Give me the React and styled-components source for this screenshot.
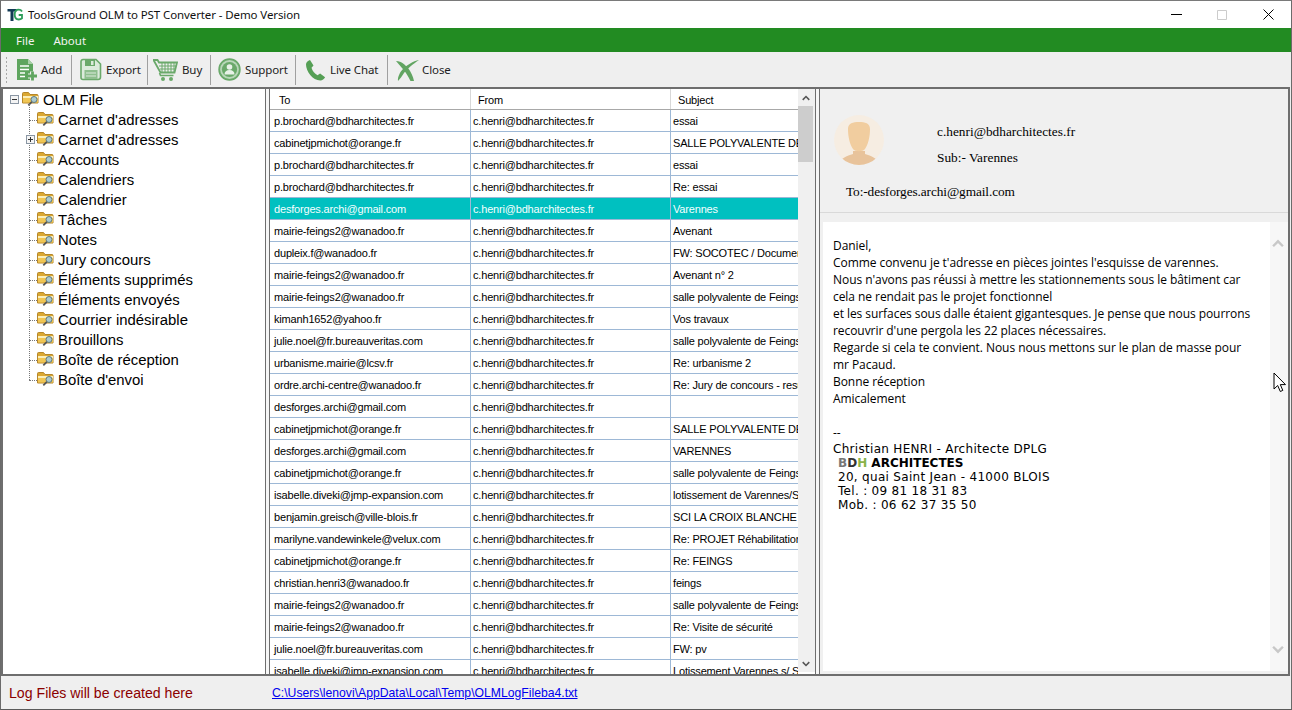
import styled, { createGlobalStyle } from 'styled-components';

const GlobalStyle = createGlobalStyle`
  html, body {
    margin: 0;
    padding: 0;
    height: 100%;
    overflow: hidden;
    background: #f0f0f0;
  }
  * {
    box-sizing: border-box;
  }
`;

const Window = styled.div`
  width: 1292px;
  height: 710px;
  display: flex;
  flex-direction: column;
  background: #efefef;
  border: 1px solid #6b6b6b;
  border-top-color: #7a7a7a;
  border-bottom-color: #5a5a5a;
  font-family: 'Liberation Sans', Arial, sans-serif;
  position: relative;
  overflow: hidden;
`;

const TitleBar = styled.div`
  height: 27px;
  flex: none;
  background: #fff;
  display: flex;
  align-items: center;
  padding-left: 6px;
  font-family: 'Noto Sans', sans-serif;
  font-size: 11.5px;
  color: #111;
`;

const TitleText = styled.span`
  margin-left: 5px;
  flex: 1;
  letter-spacing: -0.1px;
`;

const WinButton = styled.div`
  width: 46px;
  height: 27px;
  display: flex;
  align-items: center;
  justify-content: center;
`;

const MenuBar = styled.div`
  height: 24px;
  flex: none;
  background: #228b22;
  display: flex;
  align-items: center;
  padding-left: 15px;
  gap: 19px;
  font-family: 'Noto Sans', sans-serif;
  font-size: 11.5px;
  color: #f2f2f2;
`;

const ToolBar = styled.div`
  height: 35px;
  flex: none;
  display: flex;
  align-items: center;
  background: #efefef;
  padding-left: 4px;
`;

const Grip = styled.div`
  width: 3px;
  height: 27px;
  margin-right: 4px;
  background-image: radial-gradient(circle, #a8a8a8 0.8px, transparent 1px);
  background-size: 3px 4px;
`;

const ToolItem = styled.div`
  width: ${(p) => p.$w}px;
  height: 30px;
  display: flex;
  align-items: center;
  padding-left: ${(p) => p.$pad}px;
  gap: ${(p) => p.$gap}px;
  font-family: 'Noto Sans', sans-serif;
  font-size: 11.5px;
  letter-spacing: -0.1px;
  color: #222;
  border-right: ${(p) => (p.$last ? 'none' : '1px solid #a0a0a0')};
`;

const Content = styled.div`
  flex: 1;
  min-height: 0;
  display: flex;
  border-top: 2px solid #6e6e6e;
  border-bottom: 2px solid #6e6e6e;
  margin-right: 1px;
  background: #fff;
`;

const TreePane = styled.div`
  width: 264px;
  flex: none;
  background: #fff;
  border-left: 2px solid #6e6e6e;
  padding: 1px 0 0 7px;
  font-size: 14.9px;
  color: #000;
`;

const TreeRow = styled.div`
  height: 20px;
  display: flex;
  align-items: center;
  position: relative;
  padding-left: ${(p) => (p.$root ? 12 : 27)}px;
  white-space: nowrap;
  &::before {
    content: '';
    display: ${(p) => (p.$root ? 'none' : 'block')};
    position: absolute;
    left: 19px;
    top: ${(p) => (p.$first ? '-6px' : '-10px')};
    bottom: ${(p) => (p.$end ? '10px' : '0')};
    border-left: 1px dotted #777;
  }
  &::after {
    content: '';
    display: ${(p) => (p.$root ? 'none' : 'block')};
    position: absolute;
    left: 19px;
    top: 10px;
    width: 8px;
    border-top: 1px dotted #777;
  }
`;

const TreeLabel = styled.span`
  margin-left: 2px;
`;

const Expander = styled.span`
  position: absolute;
  left: ${(p) => (p.$root ? 0 : 16)}px;
  top: 5px;
  width: 9px;
  height: 9px;
  z-index: 1;
  background: #f4f4f4;
  border: 1px solid #8a96a3;
  &::before {
    content: '';
    position: absolute;
    left: 1px;
    right: 1px;
    top: 3px;
    height: 1px;
    background: #333;
  }
  &::after {
    content: '';
    display: ${(p) => (p.$plus ? 'block' : 'none')};
    position: absolute;
    top: 1px;
    bottom: 1px;
    left: 3px;
    width: 1px;
    background: #333;
  }
`;

const Splitter = styled.div`
  width: 5px;
  flex: none;
  background: #f6f6f6;
  border-left: 1px solid #6e6e6e;
  border-right: 1px solid #6e6e6e;
`;

const GridPane = styled.div`
  width: 545px;
  flex: none;
  display: flex;
  background: #fff;
  overflow: hidden;
`;

const GridBody = styled.div`
  width: 528px;
  flex: none;
  overflow: hidden;
  font-size: 11px;
  letter-spacing: -0.18px;
  color: #000;
`;

const GridRow = styled.div`
  display: grid;
  grid-template-columns: 201px 200px 127px;
  height: ${(p) => (p.$head ? 21 : 22)}px;
  background: ${(p) => (p.$selected ? '#00c0c0' : '#fff')};
  color: ${(p) => (p.$selected ? '#f4ffff' : 'inherit')};
  border-bottom: 1px solid ${(p) => (p.$head ? '#a8a8a8' : '#9db8d6')};
`;

const GridCell = styled.div`
  display: flex;
  align-items: center;
  padding-left: ${(p) => (p.$head ? 7 : 2)}px;
  padding-top: ${(p) => (p.$head ? 1 : 0)}px;
  white-space: nowrap;
  overflow: hidden;
  border-right: 1px solid ${(p) => (p.$head ? '#d8d8d8' : '#9db8d6')};
  &:first-child {
    padding-left: ${(p) => (p.$head ? 9 : 4)}px;
  }
  &:last-child {
    border-right: none;
  }
`;

const ScrollBar = styled.div`
  width: ${(p) => p.$w}px;
  flex: none;
  background: ${(p) => p.$bg};
  display: flex;
  flex-direction: column;
  align-items: center;
  justify-content: space-between;
  position: relative;
  margin-bottom: ${(p) => p.$mb}px;
  padding-right: ${(p) => p.$pr}px;
`;

const ScrollArrow = styled.div`
  height: ${(p) => p.$h}px;
  flex: none;
  display: flex;
  align-items: center;
  justify-content: center;
`;

const ScrollThumb = styled.div`
  position: absolute;
  left: 0;
  top: 17px;
  width: 15px;
  height: 56px;
  background: #cdcdcd;
`;

const PreviewPane = styled.div`
  flex: 1;
  min-width: 0;
  display: flex;
  flex-direction: column;
  background: #f0f0f0;
  border-right: 2px solid #6e6e6e;
  padding-bottom: 3px;
`;

const PreviewHead = styled.div`
  height: 124px;
  flex: none;
  border-bottom: 1px solid #d9d9d9;
  font-family: 'Liberation Serif', 'Times New Roman', serif;
  font-size: 13.33px;
  line-height: 15px;
  color: #000;
  display: flex;
  flex-direction: column;
  padding: 26px 0 0 14px;
`;

const HeadTop = styled.div`
  display: flex;
  gap: 53px;
`;

const HeadLines = styled.div`
  display: flex;
  flex-direction: column;
  gap: 11px;
  padding-top: 9px;
`;

const ToLine = styled.div`
  margin: 19px 0 0 12px;
  letter-spacing: -0.1px;
`;

const PreviewBody = styled.div`
  flex: 1;
  min-height: 0;
  margin: 9px 0 0 3px;
  display: flex;
  background: #fff;
`;

const MailText = styled.div`
  flex: 1;
  padding: 15px 10px 0 10px;
  font-family: 'Open Sans', 'Noto Sans', sans-serif;
  font-size: 12px;
  line-height: 17px;
  color: #000;
  letter-spacing: -0.06px;
`;

const Signature = styled.div`
  margin-top: 1px;
  font-family: 'DejaVu Sans', Verdana, sans-serif;
  font-size: 12px;
  line-height: 14px;
  letter-spacing: 0.3px;
`;

const SigLine = styled.div`
  padding-left: ${(p) => (p.$inset ? 5 : 0)}px;
  font-weight: ${(p) => (p.$bold ? 700 : 400)};
  letter-spacing: ${(p) => (p.$bold ? '0px' : 'inherit')};
`;

const Letter = styled.span`
  color: ${(p) => p.$c};
`;

const StatusBar = styled.div`
  height: 33px;
  flex: none;
  display: flex;
  align-items: center;
  padding-left: 8px;
  background: #efefef;
`;

const LogLabel = styled.span`
  width: 263px;
  font-size: 14.15px;
  color: #8b0000;
`;

const LogLink = styled.a`
  font-size: 12.2px;
  color: #0000ee;
  text-decoration: underline;
`;

const Cursor = styled.svg`
  position: absolute;
  left: 1272px;
  top: 371px;
`;

const FolderIcon = () => (
  <svg width="19" height="17" viewBox="0 0 19 17">
    <path d="M0.500 1.500q0-1 1-1h5l1.500 2h7q1 0 1 1v7.500H0.500z" fill="#dba832" stroke="#b5862a" />
    <path d="M1 4h15v2H1z" fill="#fbeeb8" />
    <path d="M1 6h15v4.500H1z" fill="#f0c654" />
    <circle cx="12" cy="7.500" r="3" fill="#a9c9cf" stroke="#5f7a82" />
    <path d="M9.800 9.800l-3.500 3.500" stroke="#555" strokeWidth="1.800" />
  </svg>
);

const AddIcon = () => (
  <svg width="23" height="24" viewBox="0 0 23 24">
    <path d="M2 1h11l5 5v16H2z" fill="#5fa55f" />
    <path d="M13 1v5h5z" fill="#a9cfa9" />
    <path d="M5 8h9M5 11.500h9M5 15h5M5 18.500h5" stroke="#fff" strokeWidth="1.600" />
    <path d="M17.500 13.500v9M13 18h9" stroke="#efefef" strokeWidth="5" />
    <path d="M17.500 13.500v9M13 18h9" stroke="#5fa55f" strokeWidth="2.800" />
  </svg>
);

const SaveIcon = () => (
  <svg width="22" height="23" viewBox="0 0 22 23">
    <path d="M3 1.500h13l4.500 4.500v13a2.500 2.500 0 0 1-2.500 2.500H3a2 2 0 0 1-2-2v-16a2 2 0 0 1 2-2z" fill="#dcebdc" stroke="#6aa96a" strokeWidth="1.600" />
    <path d="M5 2h10v6H5z" fill="#6aa96a" />
    <path d="M11 3h2.500v4H11z" fill="#dcebdc" />
    <path d="M4.500 12h13v9h-13z" fill="#8fbf8f" />
    <path d="M6 15h10M6 18h10" stroke="#dcebdc" />
  </svg>
);

const CartIcon = () => (
  <svg width="25" height="24" viewBox="0 0 25 24">
    <path d="M0.500 2h4l1.500 2.500h18l-2.500 10H7.500z" fill="none" stroke="#6aa96a" strokeWidth="1.800" />
    <path d="M9 5v9M12 5v9M15 5v9M18 5v9M21 5v9M6 8h17M7 11h15" stroke="#6aa96a" />
    <path d="M6.500 15l1 2.500h13" fill="none" stroke="#6aa96a" strokeWidth="1.600" />
    <circle cx="10" cy="21" r="2" fill="#6aa96a" />
    <circle cx="18" cy="21" r="2" fill="#6aa96a" />
  </svg>
);

const SupportIcon = () => (
  <svg width="23" height="23" viewBox="0 0 23 23">
    <circle cx="11.500" cy="11.500" r="10.300" fill="#b9d7b9" stroke="#6aa96a" strokeWidth="1.800" />
    <circle cx="11.500" cy="11.500" r="7.600" fill="#6aa96a" />
    <circle cx="11.500" cy="9" r="2.800" fill="#e8f2e8" />
    <path d="M6.500 16.500c0-3 2-4.500 5-4.500s5 1.500 5 4.500z" fill="#e8f2e8" />
  </svg>
);

const PhoneIcon = () => (
  <svg width="21" height="22" viewBox="0 0 21 22">
    <path d="M5 1l3.500 5.500-2 2.300c.8 3 3 5.800 6 7.500l2.600-1.800 5 3.800c-1 2-2.700 3.200-4.700 3.200C7.500 21.500 1 12 1 5.500 1 3.500 2.800 1.800 5 1z" fill="#559f55" />
  </svg>
);

const CrossIcon = () => (
  <svg width="24" height="24" viewBox="0 0 24 24">
    <path d="M1 3c6 0 9 4 12 7 3 4 5 8 6 13h-3.500C13 18 10 13 7 10 5 8 3 5 1 3z" fill="#62a562" />
    <path d="M24 2c-6 4-12 9-15 13-2 3-4 6-6 8-.5-4 2-9 5-12 4-4 10-8 16-9z" fill="#62a562" />
  </svg>
);

const Avatar = () => (
  <svg width="50" height="50" viewBox="0 0 50 50">
    <defs>
      <clipPath id="avatarClip">
        <circle cx="25" cy="25" r="25" />
      </clipPath>
    </defs>
    <circle cx="25" cy="25" r="25" fill="#f6ede2" />
    <g clipPath="url(#avatarClip)">
      <path d="M4 50c2-7 9-9 15-11v-3h12v3c6 2 13 4 15 11z" fill="#e8c39b" />
      <path d="M14 14c0-6 5-7 11-7s11 1 11 7c0 8-2 16-5 20-2 3-10 3-12 0-3-4-5-12-5-20z" fill="#f1cd9f" />
    </g>
  </svg>
);

const AppLogo = () => (
  <svg width="16" height="16" viewBox="0 0 16 16">
    <path d="M0.500 2h9v2.500H6.500V14H3.500V4.500h-3z" fill="#123a55" />
    <path d="M15 4.500c-.7-1.200-2-1.800-3.300-1.800-2.500 0-4 1.800-4 4.800s1.500 5 4 5c1.300 0 2.500-.5 3.300-1.200V8h-3.300" fill="none" stroke="#2f9e5b" strokeWidth="1.800" />
  </svg>
);

const Chevron = ({ up, color, w, h }) => (
  <svg width={w} height={h} viewBox="0 0 11 8">
    <path d={up ? 'M1 6.500l4.500-4.500 4.500 4.500' : 'M1 1.500l4.500 4.500 4.500-4.500'} fill="none" stroke={color} strokeWidth="2.200" />
  </svg>
);

const toolItems = [
  { label: 'Add', icon: <AddIcon />, w: 60, pad: 3, gap: 3 },
  { label: 'Export', icon: <SaveIcon />, w: 76, pad: 8, gap: 4 },
  { label: 'Buy', icon: <CartIcon />, w: 63, pad: 5, gap: 4 },
  { label: 'Support', icon: <SupportIcon />, w: 85, pad: 7, gap: 4 },
  { label: 'Live Chat', icon: <PhoneIcon />, w: 92, pad: 9, gap: 4 },
  { label: 'Close', icon: <CrossIcon />, w: 70, pad: 7, gap: 3, last: true },
];

const folders = [
  'Carnet d\'adresses',
  'Carnet d\'adresses',
  'Accounts',
  'Calendriers',
  'Calendrier',
  'Tâches',
  'Notes',
  'Jury concours',
  'Éléments supprimés',
  'Éléments envoyés',
  'Courrier indésirable',
  'Brouillons',
  'Boîte de réception',
  'Boîte d\'envoi',
];

const rows = [
  ['p.brochard@bdharchitectes.fr', 'essai'],
  ['cabinetjpmichot@orange.fr', 'SALLE POLYVALENTE DE FEINGS'],
  ['p.brochard@bdharchitectes.fr', 'essai'],
  ['p.brochard@bdharchitectes.fr', 'Re: essai'],
  ['desforges.archi@gmail.com', 'Varennes'],
  ['mairie-feings2@wanadoo.fr', 'Avenant'],
  ['dupleix.f@wanadoo.fr', 'FW: SOCOTEC / Documents'],
  ['mairie-feings2@wanadoo.fr', 'Avenant n° 2'],
  ['mairie-feings2@wanadoo.fr', 'salle polyvalente de Feings'],
  ['kimanh1652@yahoo.fr', 'Vos travaux'],
  ['julie.noel@fr.bureauveritas.com', 'salle polyvalente de Feings'],
  ['urbanisme.mairie@lcsv.fr', 'Re: urbanisme 2'],
  ['ordre.archi-centre@wanadoo.fr', 'Re: Jury de concours - resultat'],
  ['desforges.archi@gmail.com', ''],
  ['cabinetjpmichot@orange.fr', 'SALLE POLYVALENTE DE FEINGS'],
  ['desforges.archi@gmail.com', 'VARENNES'],
  ['cabinetjpmichot@orange.fr', 'salle polyvalente de Feings'],
  ['isabelle.diveki@jmp-expansion.com', 'lotissement de Varennes/Sologne'],
  ['benjamin.greisch@ville-blois.fr', 'SCI LA CROIX BLANCHE'],
  ['marilyne.vandewinkele@velux.com', 'Re: PROJET Réhabilitation'],
  ['cabinetjpmichot@orange.fr', 'Re: FEINGS'],
  ['christian.henri3@wanadoo.fr', 'feings'],
  ['mairie-feings2@wanadoo.fr', 'salle polyvalente de Feings'],
  ['mairie-feings2@wanadoo.fr', 'Re: Visite de sécurité'],
  ['julie.noel@fr.bureauveritas.com', 'FW: pv'],
  ['isabelle.diveki@jmp-expansion.com', 'Lotissement Varennes s/ Sologne'],
];

const mailLines = [
  'Daniel,',
  'Comme convenu je t\'adresse en pièces jointes l\'esquisse de varennes.',
  'Nous n\'avons pas réussi à mettre les stationnements sous le bâtiment car',
  'cela ne rendait pas le projet fonctionnel',
  'et les surfaces sous dalle étaient gigantesques. Je pense que nous pourrons',
  'recouvrir d\'une pergola les 22 places nécessaires.',
  'Regarde si cela te convient. Nous nous mettons sur le plan de masse pour',
  'mr Pacaud.',
  'Bonne réception',
  'Amicalement',
  '\u00a0',
  '--',
];

export default function App() {
  return (
    <>
      <GlobalStyle />
      <Window>
        <TitleBar>
          <AppLogo />
          <TitleText>ToolsGround OLM to PST Converter - Demo Version</TitleText>
          <WinButton>
            <svg width="11" height="1"><path d="M0 .5h11" stroke="#000" /></svg>
          </WinButton>
          <WinButton>
            <svg width="10" height="10"><path d="M.5.5h9v9h-9z" fill="none" stroke="#ccc" /></svg>
          </WinButton>
          <WinButton>
            <svg width="11" height="11"><path d="M.5.5l10 10M10.500.5l-10 10" stroke="#000" /></svg>
          </WinButton>
        </TitleBar>
        <MenuBar>
          <span>File</span>
          <span>About</span>
        </MenuBar>
        <ToolBar>
          <Grip />
          {toolItems.map((t) => (
            <ToolItem key={t.label} $w={t.w} $pad={t.pad} $gap={t.gap} $last={t.last}>
              {t.icon}
              <span>{t.label}</span>
            </ToolItem>
          ))}
        </ToolBar>
        <Content>
          <TreePane>
            <TreeRow $root>
              <Expander $root />
              <FolderIcon />
              <TreeLabel>OLM File</TreeLabel>
            </TreeRow>
            {folders.map((name, i) => (
              <TreeRow key={i} $first={i === 0} $end={i === folders.length - 1}>
                {i === 1 && <Expander $plus />}
                <FolderIcon />
                <TreeLabel>{name}</TreeLabel>
              </TreeRow>
            ))}
          </TreePane>
          <Splitter />
          <GridPane>
            <GridBody>
              <GridRow $head>
                <GridCell $head>To</GridCell>
                <GridCell $head>From</GridCell>
                <GridCell $head>Subject</GridCell>
              </GridRow>
              {rows.map((r, i) => (
                <GridRow key={i} $selected={i === 4}>
                  <GridCell>{r[0]}</GridCell>
                  <GridCell>c.henri@bdharchitectes.fr</GridCell>
                  <GridCell>{r[1]}</GridCell>
                </GridRow>
              ))}
            </GridBody>
            <ScrollBar $w={17} $bg="#f0f0f0" $mb={2} $pr={2}>
              <ScrollArrow $h={17}><Chevron up color="#555" w={8} h={6} /></ScrollArrow>
              <ScrollThumb />
              <ScrollArrow $h={17}><Chevron color="#555" w={8} h={6} /></ScrollArrow>
            </ScrollBar>
          </GridPane>
          <Splitter />
          <PreviewPane>
            <PreviewHead>
              <HeadTop>
                <Avatar />
                <HeadLines>
                  <span>c.henri@bdharchitectes.fr</span>
                  <span>Sub:- Varennes</span>
                </HeadLines>
              </HeadTop>
              <ToLine>To:-desforges.archi@gmail.com</ToLine>
            </PreviewHead>
            <PreviewBody>
              <MailText>
                {mailLines.map((l, i) => (
                  <div key={i}>{l}</div>
                ))}
                <Signature>
                  <SigLine>Christian HENRI - Architecte DPLG</SigLine>
                  <SigLine $inset $bold>
                    <Letter $c="#777">B</Letter>
                    <Letter $c="#333">D</Letter>
                    <Letter $c="#8ab34a">H</Letter> ARCHITECTES
                  </SigLine>
                  <SigLine $inset>20, quai Saint Jean - 41000 BLOIS</SigLine>
                  <SigLine $inset>Tel. : 09 81 18 31 83</SigLine>
                  <SigLine $inset>Mob. : 06 62 37 35 50</SigLine>
                </Signature>
              </MailText>
              <ScrollBar $w={18} $bg="#f7f7f7" $mb={0} $pr={3}>
                <ScrollArrow $h={42}><Chevron up color="#c8c8c8" w={12} h={9} /></ScrollArrow>
                <ScrollArrow $h={44}><Chevron color="#c8c8c8" w={12} h={9} /></ScrollArrow>
              </ScrollBar>
            </PreviewBody>
          </PreviewPane>
        </Content>
        <StatusBar>
          <LogLabel>Log Files will be created here</LogLabel>
          <LogLink href="#">C:\Users\lenovi\AppData\Local\Temp\OLMLogFileba4.txt</LogLink>
        </StatusBar>
        <Cursor width="13" height="21" viewBox="0 0 13 21">
          <path d="M1 1v16l3.700-3.500 2.600 6 2.500-1.100-2.500-5.800h5.200z" fill="#fff" stroke="#000" />
        </Cursor>
      </Window>
    </>
  );
}
